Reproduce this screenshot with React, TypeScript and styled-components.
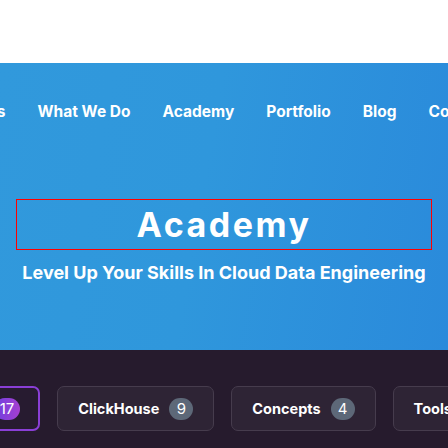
import React from "react";
import styled, { createGlobalStyle } from "styled-components";

const Global = createGlobalStyle`
  html, body { margin: 0; padding: 0; background: #ffffff; }
  body { font-family: Inter, "Noto Sans", sans-serif; overflow: hidden; }
  * { box-sizing: border-box; }
`;

const Page = styled.div`
  width: 448px;
  height: 448px;
  display: flex;
  flex-direction: column;
  overflow: hidden;
`;

const TopBar = styled.header`
  height: 63px;
  flex-shrink: 0;
  background: #ffffff;
`;

const Hero = styled.section`
  height: 287px;
  flex-shrink: 0;
  display: flex;
  flex-direction: column;
  background: linear-gradient(100deg, #3199dc 0%, #2f97dc 45%, #2a8adb 100%);
`;

const Nav = styled.nav`
  height: 96px;
  display: flex;
  align-items: center;
  justify-content: center;
  gap: 32px;
  overflow: hidden;
`;

const NavItem = styled.a`
  flex-shrink: 0;
  white-space: nowrap;
  color: #ffffff;
  font-size: 15.5px;
  font-weight: 700;
  letter-spacing: 0;
`;

const TitleBox = styled.div`
  margin: 40px 16px 0;
  height: 51px;
  border: 1px solid #ff0000;
  display: flex;
  align-items: center;
  justify-content: center;
`;

const Title = styled.h1`
  margin: 0;
  color: #ffffff;
  font-size: 34px;
  font-weight: 700;
  letter-spacing: 2.5px;
  line-height: 1;
`;

const Subtitle = styled.p`
  margin: 11px 0 0;
  text-align: center;
  color: #ffffff;
  font-size: 18px;
  font-weight: 700;
  line-height: 24px;
  white-space: nowrap;
`;

const Filters = styled.section`
  flex: 1;
  background: #261b2d;
  display: flex;
  justify-content: center;
  gap: 17px;
  padding-top: 36px;
  overflow: hidden;
`;

const Chip = styled.button<{ $active?: boolean }>`
  flex-shrink: 0;
  height: 45px;
  display: flex;
  align-items: center;
  gap: 10px;
  padding: ${(p) => (p.$active ? "0 18px 0 22px" : "0 20px")};
  border-radius: 7px;
  border: ${(p) => (p.$active ? "2px solid #8a3fd6" : "1px solid #463c4d")};
  background: ${(p) => (p.$active ? "#271b30" : "#2e2435")};
  color: #ffffff;
  font-family: Inter, "Noto Sans", sans-serif;
  font-size: 14.5px;
  font-weight: 700;
  white-space: nowrap;
`;

const Count = styled.span<{ $active?: boolean }>`
  min-width: 24px;
  height: 22px;
  padding: 0 6px;
  border-radius: 11px;
  display: inline-flex;
  align-items: center;
  justify-content: center;
  font-size: 15px;
  font-weight: 400;
  color: #ffffff;
  background: ${(p) =>
    p.$active ? "linear-gradient(90deg, #6d3fe0, #a63fd0)" : "#5d6878"};
`;

const navItems = ["About Us", "What We Do", "Academy", "Portfolio", "Blog", "Contact Us"];

const chips = [
  { label: "All", count: 17, active: true },
  { label: "ClickHouse", count: 9 },
  { label: "Concepts", count: 4 },
  { label: "Tools", count: 4 },
];

export default function App() {
  return (
    <Page>
      <Global />
      <TopBar />
      <Hero>
        <Nav>
          {navItems.map((n) => (
            <NavItem key={n}>{n}</NavItem>
          ))}
        </Nav>
        <TitleBox>
          <Title>Academy</Title>
        </TitleBox>
        <Subtitle>Level Up Your Skills In Cloud Data Engineering</Subtitle>
      </Hero>
      <Filters>
        {chips.map((c) => (
          <Chip key={c.label} $active={c.active}>
            {c.label}
            <Count $active={c.active}>{c.count}</Count>
          </Chip>
        ))}
      </Filters>
    </Page>
  );
}
